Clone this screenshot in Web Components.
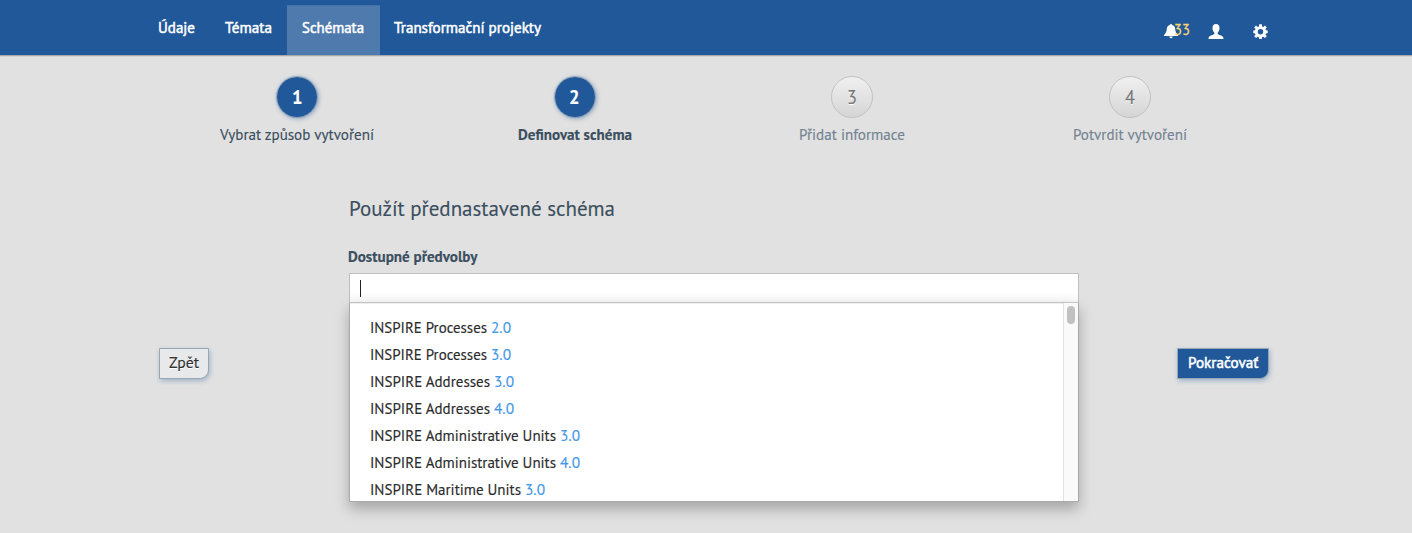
<!DOCTYPE html>
<html lang="cs">
<head>
<meta charset="utf-8">
<title>Definovat schéma</title>
<style>
html,body{margin:0;height:100%}
body{background:#e1e1e1;overflow:hidden;font:15px/20px "PT Sans","Noto Sans","Open Sans",sans-serif;color:#3c4f60;-webkit-text-stroke:.15px}
</style>
</head>
<body>
<schema-app></schema-app>
<script>
const define = (name, html, ready) => customElements.define(name, class extends HTMLElement {
  connectedCallback() {
    if (this.shadowRoot) return;
    const root = this.attachShadow({mode: 'open'});
    const t = document.createElement('template');
    t.innerHTML = html;
    root.append(document.importNode(t.content, true));
    if (ready) ready(this, root);
  }
});

/* One line of text, condensed to the width given in "w". */
define('fit-text', `<style>
:host{display:inline-block;white-space:pre;vertical-align:top;text-align:left}
span{display:inline-block;transform-origin:0 50%}
</style><span><slot></slot></span>`, (el, root) => {
  const s = root.querySelector('span');
  const w = +el.getAttribute('w');
  const natural = s.getBoundingClientRect().width;
  el.style.width = w + 'px';
  if (natural) s.style.transform = 'scaleX(' + w / natural + ')';
});

define('nav-tab', `<style>
:host{display:block;box-sizing:border-box;height:50px;padding:13px 15px 0;color:#fff;-webkit-text-stroke:.5px #fff}
:host([active]){background:#4f7aad;box-shadow:inset 0 1px #4571a7;padding-right:16px}
</style><slot></slot>`);

define('user-tools', `<style>
:host{display:flex;align-items:flex-start;padding-top:18px;color:#f5d375;-webkit-text-stroke:.3px}
svg{display:block;fill:#fff}
.bell{margin:6px -4px 0 0}.user{margin:6px 0 0 17.5px}.gear{margin:6px 1px 0 29.5px}
fit-text{margin-top:2px}
</style>
<svg class="bell" width="14" height="15" viewBox="0 0 13 15" preserveAspectRatio="none"><path d="M5.500 1.100a1 1 0 0 1 2 0C9.500 1.600 10.300 3 10.400 5c.1 2.500 1 4.300 2.600 6v1H0v-1C1.600 9.300 2.500 7.500 2.600 5 2.700 3 3.500 1.600 5.500 1.100zM4.900 12.600h3.200a1.600 1.600 0 0 1-3.200 0z"/></svg>
<fit-text w="16">33</fit-text>
<svg class="user" width="16" height="15" viewBox="0 0 16 15"><path d="M8 0C5.800 0 4.500 1.500 4.500 3.900c0 2 .7 3.700 1.800 4.600v1.300c-.3.700-1.300 1-2.600 1.500C1.700 12 .6 12.400.5 14.900h15c-.1-2.500-1.200-2.900-3.200-3.600-1.300-.5-2.300-.8-2.600-1.500V8.500c1.100-.9 1.800-2.600 1.800-4.600C11.500 1.500 10.200 0 8 0z"/></svg>
<svg class="gear" width="15" height="15" viewBox="0 0 15 15"><path fill-rule="evenodd" d="M6.200.3h2.600l.3 2.100 1.200.5 1.700-1.300 1.800 1.800-1.300 1.700.5 1.200 1.700.3v2.500l-1.700.3-.5 1.200 1.300 1.700-1.800 1.800-1.700-1.300-1.200.5-.3 1.700H6.200l-.3-1.700-1.200-.5L3 14.100l-1.800-1.800 1.300-1.700L2 9.400.3 9.100V6.600L2 6.300l.5-1.200-1.300-1.700L3 1.600l1.700 1.300 1.200-.5zM7.500 5a2.700 2.700 0 1 0 0 5.400 2.700 2.700 0 0 0 0-5.400z"/></svg>`);

define('top-bar', `<style>
:host{display:flex;justify-content:space-between;align-items:flex-start;box-sizing:border-box;height:56px;padding:0 143px;background:#205899;border-bottom:1px solid #a7a8aa;box-shadow:0 1px #d3d3d3}
nav{display:flex;padding-top:5px}
</style>
<nav>
<nav-tab><fit-text w="37">Údaje</fit-text></nav-tab>
<nav-tab><fit-text w="47">Témata</fit-text></nav-tab>
<nav-tab active><fit-text w="62">Schémata</fit-text></nav-tab>
<nav-tab style="padding-left:14px"><fit-text w="147">Transformační projekty</fit-text></nav-tab>
</nav><user-tools></user-tools>`);

define('wizard-step', `<style>
:host{display:flex;flex:1;flex-direction:column;align-items:center;color:#748492}
.dot{box-sizing:border-box;width:42px;height:42px;border-radius:50%;border:1px solid #c2c2c2;background:linear-gradient(#f0f0f0,#d5d5d5);display:flex;align-items:center;justify-content:center;font-size:19px;color:#777;text-shadow:0 1px #fff;margin-bottom:7px}
:host([done]){color:#3c4f60}
:host([done]) .dot{background:#205899 padding-box;border-color:#5f7da080;color:#fff;font-size:20px;font-weight:700;text-shadow:none;box-shadow:1px 1px 4px #20589966}
:host([current]){font-weight:700}
</style><div class="dot"><slot name="number"></slot></div><slot></slot>`);

define('wizard-steps', `<style>:host{display:flex;width:1111px;margin:20px 0 0 158px}</style>
<wizard-step done><fit-text slot="number" w="10.5">1</fit-text><fit-text w="154">Vybrat způsob vytvoření</fit-text></wizard-step>
<wizard-step done current><fit-text slot="number" w="10.5">2</fit-text><fit-text w="114">Definovat schéma</fit-text></wizard-step>
<wizard-step><fit-text slot="number" w="10">3</fit-text><fit-text w="106">Přidat informace</fit-text></wizard-step>
<wizard-step><fit-text slot="number" w="10">4</fit-text><fit-text w="114">Potvrdit vytvoření</fit-text></wizard-step>`);

define('action-button', `<style>
:host{display:block;flex:none;box-sizing:border-box;height:31px;padding:4px 9px;border:1px solid #97a7b4;border-radius:0 0 9px 0;background:#e8e9eb;color:#333;text-shadow:0 1px #fff;box-shadow:1px 2px 5px #20589955}
:host([primary]){padding:4px 10px 4px 9.5px;background:#205899;color:#fff;text-shadow:none;-webkit-text-stroke:.5px #fff}
</style><slot></slot>`);

define('preset-option', `<style>
:host{display:flex;gap:4px;height:27px;line-height:27px;color:#2b2b2b}
.v{color:#4598e8}
</style><slot></slot>`, (el, root) => {
  const v = document.createElement('fit-text');
  v.className = 'v';
  v.setAttribute('w', '20');
  v.textContent = el.getAttribute('version');
  root.append(v);
});

define('preset-picker', `<style>
:host{display:block;width:730px}
.input{box-sizing:border-box;height:29px;border:1px solid #bfbfbf;border-bottom:0;background:linear-gradient(#fff 60%,#f8f8f8);padding:6px 10px}
.caret{width:1px;height:17px;background:#222}
.menu{box-sizing:border-box;height:200px;display:flex;border:1px solid #aaa;border-top-color:#c4c4c4;background:#fff;box-shadow:0 7px 13px #0004;overflow:hidden}
.list{flex:1;padding:11px 0 0 20.4px;box-shadow:inset 0 1px #eee}
.track{box-sizing:border-box;width:15px;background:#fafafa;border-left:1px solid #e3e3e3;padding:3px 3px}
.thumb{width:8px;height:18px;border-radius:4px;background:#c1c1c1}
</style>
<div class="input"><div class="caret"></div></div>
<div class="menu"><div class="list">
<preset-option version="2.0"><fit-text w="117">INSPIRE Processes</fit-text></preset-option>
<preset-option version="3.0"><fit-text w="117">INSPIRE Processes</fit-text></preset-option>
<preset-option version="3.0"><fit-text w="120">INSPIRE Addresses</fit-text></preset-option>
<preset-option version="4.0"><fit-text w="120">INSPIRE Addresses</fit-text></preset-option>
<preset-option version="3.0"><fit-text w="186">INSPIRE Administrative Units</fit-text></preset-option>
<preset-option version="4.0"><fit-text w="186">INSPIRE Administrative Units</fit-text></preset-option>
<preset-option version="3.0"><fit-text w="151">INSPIRE Maritime Units</fit-text></preset-option>
</div><div class="track"><div class="thumb"></div></div></div>`);

define('schema-form', `<style>
:host{display:flex;width:1110px;margin:49px 0 0 159px;align-items:flex-start}
h1{margin:0 0 23px -.5px;font-size:21px;line-height:30px;font-weight:400}
.label{font-weight:700;height:20px;margin-bottom:6px;margin-left:-1px}
.body{width:730px;margin:0 98px 0 140px}
action-button{margin-top:154px}
</style>
<action-button><fit-text w="30">Zpět</fit-text></action-button>
<div class="body"><h1><fit-text w="266">Použít přednastavené schéma</fit-text></h1>
<div class="label"><fit-text w="129.500">Dostupné předvolby</fit-text></div>
<preset-picker></preset-picker></div>
<action-button primary><fit-text w="70.500">Pokračovať</fit-text></action-button>`);

define('schema-app', `<style>:host{display:block}</style>
<top-bar></top-bar><wizard-steps></wizard-steps><schema-form></schema-form>`);
</script>
</body>
</html>
